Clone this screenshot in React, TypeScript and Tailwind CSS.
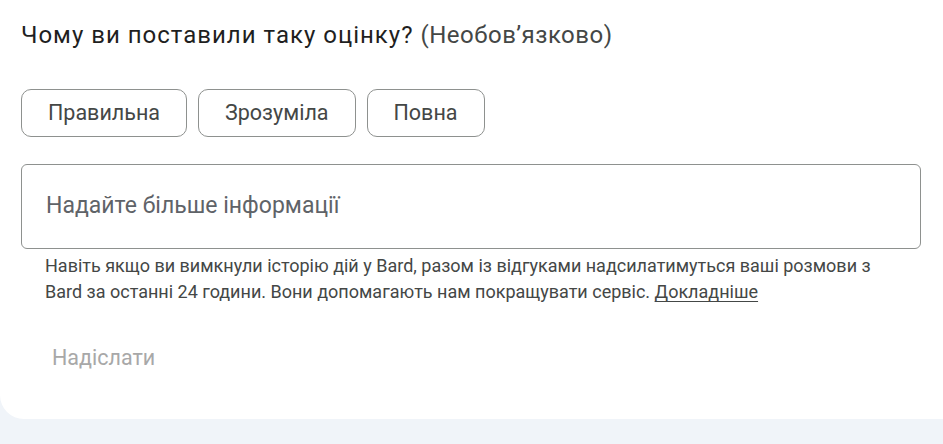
import React from "react";

export default function App() {
  const chips = ["Правильна", "Зрозуміла", "Повна"];
  return (
    <div className="w-[943px] h-[444px] bg-[#f0f4f9] overflow-hidden font-[Roboto,'Noto_Sans',sans-serif]">
      <div className="bg-white h-[419px] rounded-bl-[24px] pl-[21px] pr-[22px] pt-[19px]">
        <div className="text-[24px] leading-[32px] text-[#1f1f1f] tracking-[1px] whitespace-nowrap">
          Чому ви поставили таку оцінку?{" "}
          <span className="text-[#444746] tracking-[0.5px]">(Необов’язково)</span>
        </div>
        <div className="flex gap-[11px] mt-[38px]">
          {chips.map((c) => (
            <button
              key={c}
              className="h-[48px] px-[26px] rounded-[10px] border border-[#8e918f] text-[21.5px] text-[#444746] bg-white"
            >
              {c}
            </button>
          ))}
        </div>
        <div className="mt-[27px] h-[85px] w-[900px] rounded-[6px] border border-[#8e918f] flex items-center px-[24px]">
          <span className="text-[23px] text-[#5f6368]">Надайте більше інформації</span>
        </div>
        <p className="mt-[4px] pl-[24px] pr-[20px] text-[18px] leading-[26px] text-[#444746]">
          Навіть якщо ви вимкнули історію дій у Bard, разом із відгуками надсилатимуться ваші розмови з Bard за останні 24 години. Вони допомагають нам покращувати сервіс.{" "}
          <span className="underline underline-offset-[3px]">Докладніше</span>
        </p>
        <div className="mt-[39px] pl-[31px] text-[21.5px] leading-[28px] text-[#a8a8a8]">Надіслати</div>
      </div>
    </div>
  );
}
